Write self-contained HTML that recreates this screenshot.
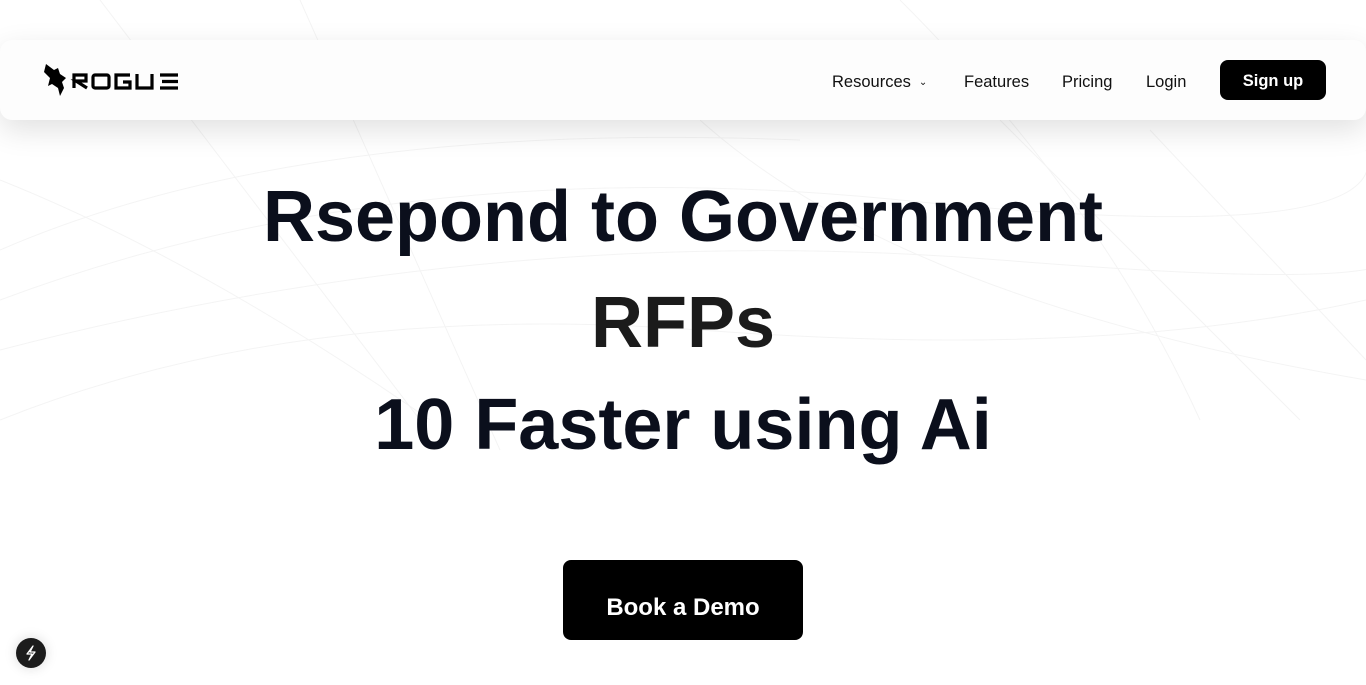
<!DOCTYPE html>
<html><head><style>
html,body{margin:0;padding:0;width:1366px;height:685px;overflow:hidden;background:#fff;font-family:"Liberation Sans",sans-serif;}
.bg{position:absolute;left:0;top:0;width:1366px;height:685px;}
.nav{position:absolute;left:0;top:40px;width:1366px;height:80px;background:#fdfdfd;border-radius:12px;box-shadow:0 10px 30px rgba(0,0,0,0.12);}
.logo{position:absolute;left:44px;top:62px;}
.links{position:absolute;top:42px;height:80px;display:flex;align-items:center;font-size:16.5px;color:#111;}
.signup{position:absolute;left:1220px;top:60px;width:106px;height:40px;background:#000;color:#fff;border-radius:8px;font-weight:bold;font-size:16.5px;display:flex;align-items:center;justify-content:center;padding-top:2px;box-sizing:border-box;}
h1{position:absolute;left:0;width:1366px;margin:0;text-align:center;font-size:72px;font-weight:bold;color:#0b0f1c;letter-spacing:0px;}
.btn{position:absolute;left:563px;top:560px;width:240px;height:80px;background:#000;border-radius:8px;color:#fff;font-weight:bold;font-size:24px;text-align:center;line-height:96px;}
.fab{position:absolute;left:16px;top:638px;width:30px;height:30px;border-radius:50%;background:#1c1c1c;box-shadow:0 0 12px rgba(0,0,0,0.15);}
</style></head><body>
<svg class="bg" viewBox="0 0 1366 685" fill="none" stroke="#f4f4f4" stroke-width="1">
<path d="M0 300 Q400 150 900 200 T1366 150"/><path d="M0 350 Q500 220 1000 260 T1366 230"/>
<path d="M0 420 Q300 300 700 330 T1366 300"/><path d="M0 250 Q300 120 800 140"/>
<path d="M100 0 L420 420"/><path d="M300 0 L500 450"/><path d="M1000 120 L1300 420"/><path d="M1150 130 L1366 360"/>
<path d="M700 120 Q900 300 1366 380"/><path d="M0 180 Q200 260 430 420"/><path d="M900 0 Q1100 200 1200 420"/>
</svg>
<div class="nav"></div>
<svg class="logo" width="140" height="36" viewBox="0 0 140 36">
<path d="M2 2 L10 8 L14 6 L16 12 L22 16 L18 20 L20 26 L16 34 L14 26 L8 22 L4 24 L6 16 L0 10 Z" fill="#000"/>
<g fill="none" stroke="#000" stroke-width="3.2">
<path d="M30 26 V13 H42 V19 H32 L43 26"/>
<rect x="49" y="13" width="16" height="13" rx="2"/>
<path d="M86 13 H72 V26 H86 V20 H79"/>
<path d="M93 12 V26 H108 V12"/>
<path d="M134 13 H116 M118 19.5 H134 M116 26 H134"/>
</g></svg>
<div class="links" style="left:832px">Resources <span style="font-size:10px;margin-left:8px">&#8964;</span></div>
<div class="links" style="left:964px">Features</div>
<div class="links" style="left:1062px">Pricing</div>
<div class="links" style="left:1146px">Login</div>
<div class="signup">Sign up</div>
<h1 style="top:176px">Rsepond to Government</h1>
<h1 style="top:282px;color:#1b1b1b">RFPs</h1>
<h1 style="top:384px">10 Faster using Ai</h1>
<div class="btn">Book a Demo</div>
<div class="fab"><svg width="30" height="30" viewBox="0 0 30 30"><path d="M17 8 L11 16 H16 L13 22 L19 14 H14 Z" fill="none" stroke="#fff" stroke-width="1.3" stroke-linejoin="round"/></svg></div>
</body></html>
